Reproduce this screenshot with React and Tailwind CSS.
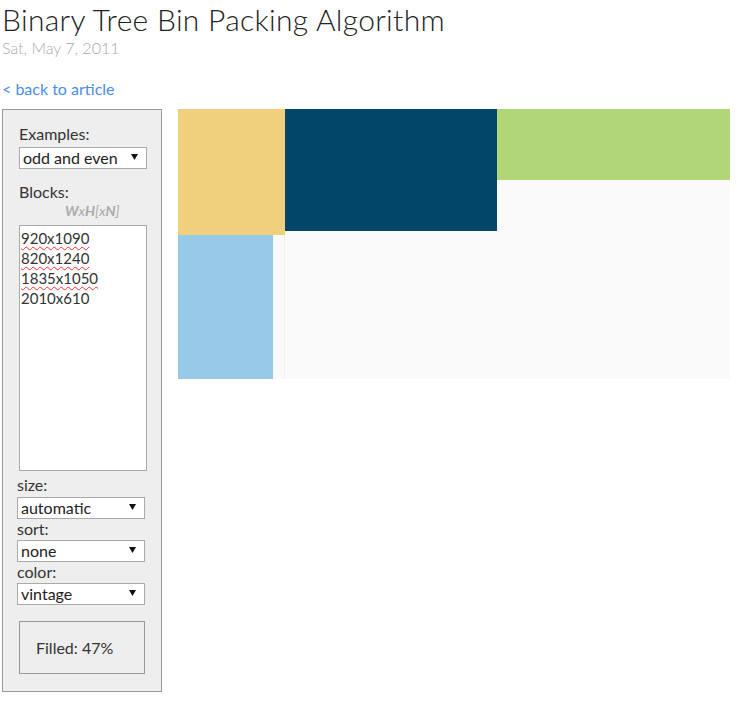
import React from "react";

const blocks = [
  { x: 0, y: 0, w: 107, h: 126, color: "bg-[#f0d07a]" },
  { x: 107, y: 0, w: 212, h: 122, color: "bg-[#02476a]" },
  { x: 319, y: 0, w: 233, h: 71, color: "bg-[#b1d677]" },
  { x: 0, y: 126, w: 95, h: 144, color: "bg-[#97cae9]" },
];

const lines = [
  { text: "920x1090", typo: true },
  { text: "820x1240", typo: true },
  { text: "1835x1050", typo: true },
  { text: "2010x610", typo: false },
];

function Select({ value, className = "" }) {
  return (
    <div className={`relative w-[128px] h-[22px] ${className}`}>
      <select
        defaultValue={value}
        className="appearance-none w-full h-full bg-white border border-[#aaa] pl-[3px] text-[16px] leading-[20px] text-[#222] outline-none"
      >
        <option>{value}</option>
      </select>
      <svg
        className="absolute right-[9px] top-[8px] pointer-events-none"
        width="7"
        height="6"
        viewBox="0 0 7 6"
      >
        <polygon points="0,0 7,0 3.5,6" fill="#111" />
      </svg>
    </div>
  );
}

export default function App() {
  return (
    <div
      className="bg-white min-h-[702px] text-[#333]"
      style={{ fontFamily: "Lato, 'Open Sans', sans-serif" }}
    >
      {/* Header */}
      <div className="pl-[2px]">
        <h1 className="text-[30px] leading-[38px] font-light text-[#222] tracking-[0.3px]">
          Binary Tree Bin Packing Algorithm
        </h1>
        <div className="text-[16px] leading-[20px] text-[#aaa] font-light">
          Sat, May 7, 2011
        </div>
        <a
          href="#"
          className="block mt-[21px] text-[16px] leading-[20px] text-[#4a8cf0]"
        >
          &lt; back to article
        </a>
      </div>

      <div className="flex items-start mt-[10px]">
        {/* Controls panel */}
        <div className="ml-[2px] w-[160px] h-[583px] border border-[#999] bg-[#eee]">
          <div className="px-[16px] pt-[14px]">
            <div className="text-[16px] leading-[20px]">Examples:</div>
            <Select value="odd and even" className="mt-[2px]" />
            <div className="mt-[14px] text-[16px] leading-[20px]">Blocks:</div>
            <div className="pl-[46px] text-[14px] leading-[18px] italic text-[#aaa]">
              <b>W</b>x<b>H</b>[x<b>N</b>]
            </div>
            <div className="mt-[5px] w-[128px] h-[246px] bg-white border border-[#aaa] pl-[1px] pt-[2px] text-[15px] leading-[20px] text-[#333]">
              {lines.map((l) => (
                <div key={l.text}>
                  <span
                    className={
                      l.typo
                        ? "underline decoration-wavy decoration-red-500 decoration-1 underline-offset-2"
                        : ""
                    }
                  >
                    {l.text}
                  </span>
                </div>
              ))}
            </div>
          </div>

          <div className="px-[14px] mt-[3px]">
            <div className="text-[16px] leading-[21px]">size:</div>
            <Select value="automatic" className="mt-[1px]" />
            <div className="text-[16px] leading-[21px]">sort:</div>
            <Select value="none" />
            <div className="text-[16px] leading-[21px]">color:</div>
            <Select value="vintage" />
            <div className="mt-[17px] ml-[2px] w-[126px] h-[53px] border border-[#999] bg-[#eee] flex items-center pl-[16px] text-[16px] text-[#333]">
              Filled: 47%
            </div>
          </div>
        </div>

        {/* Canvas */}
        <div className="ml-[16px] relative w-[552px] h-[270px] bg-[#fafafa]">
          {blocks.map((b, i) => (
            <div
              key={i}
              className={`absolute ${b.color}`}
              style={{ left: b.x, top: b.y, width: b.w, height: b.h }}
            />
          ))}
          <div className="absolute left-[106px] top-[126px] w-px h-[144px] bg-[#f0f0f0]" />
        </div>
      </div>
    </div>
  );
}
